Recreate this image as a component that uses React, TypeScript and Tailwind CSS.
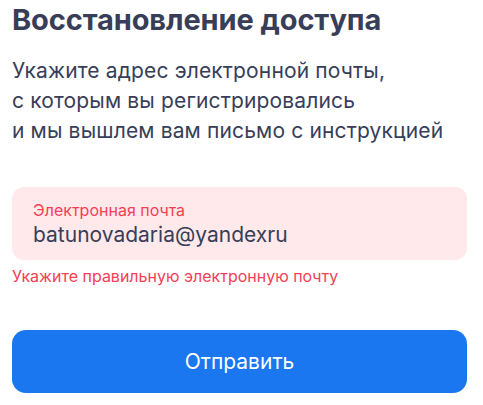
export default function App() {
  return (
    <div className="w-[483px] h-[405px] bg-white px-3 font-['Inter',sans-serif] text-[#383e58]">
      <h1 className="pt-[2px] text-[29px] font-bold leading-[36px] tracking-[-0.1px]">
        Восстановление доступа
      </h1>
      <p className="mt-[18px] text-[21px] leading-[30px] tracking-[0.15px]">
        Укажите адрес электронной почты,
        <br />
        с которым вы регистрировались
        <br />и мы вышлем вам письмо с инструкцией
      </p>

      <div className="mt-[41px] flex h-[73px] w-[455px] flex-col justify-center rounded-[12px] bg-[#ffe9ea] px-[21px]">
        <label className="text-[16px] leading-[20px] text-[#f43f55]">
          Электронная почта
        </label>
        <div className="mt-[2px] text-[21px] leading-[26px] text-[#383e58]">
          batunovadaria@yandexru
        </div>
      </div>
      <p className="mt-[6px] text-[16px] leading-[20px] text-[#f43f55]">
        Укажите правильную электронную почту
      </p>

      <button className="mt-[44px] flex h-[63px] w-[455px] items-center justify-center rounded-[14px] bg-[#1a77f0] text-[21px] text-white">
        Отправить
      </button>
    </div>
  );
}
